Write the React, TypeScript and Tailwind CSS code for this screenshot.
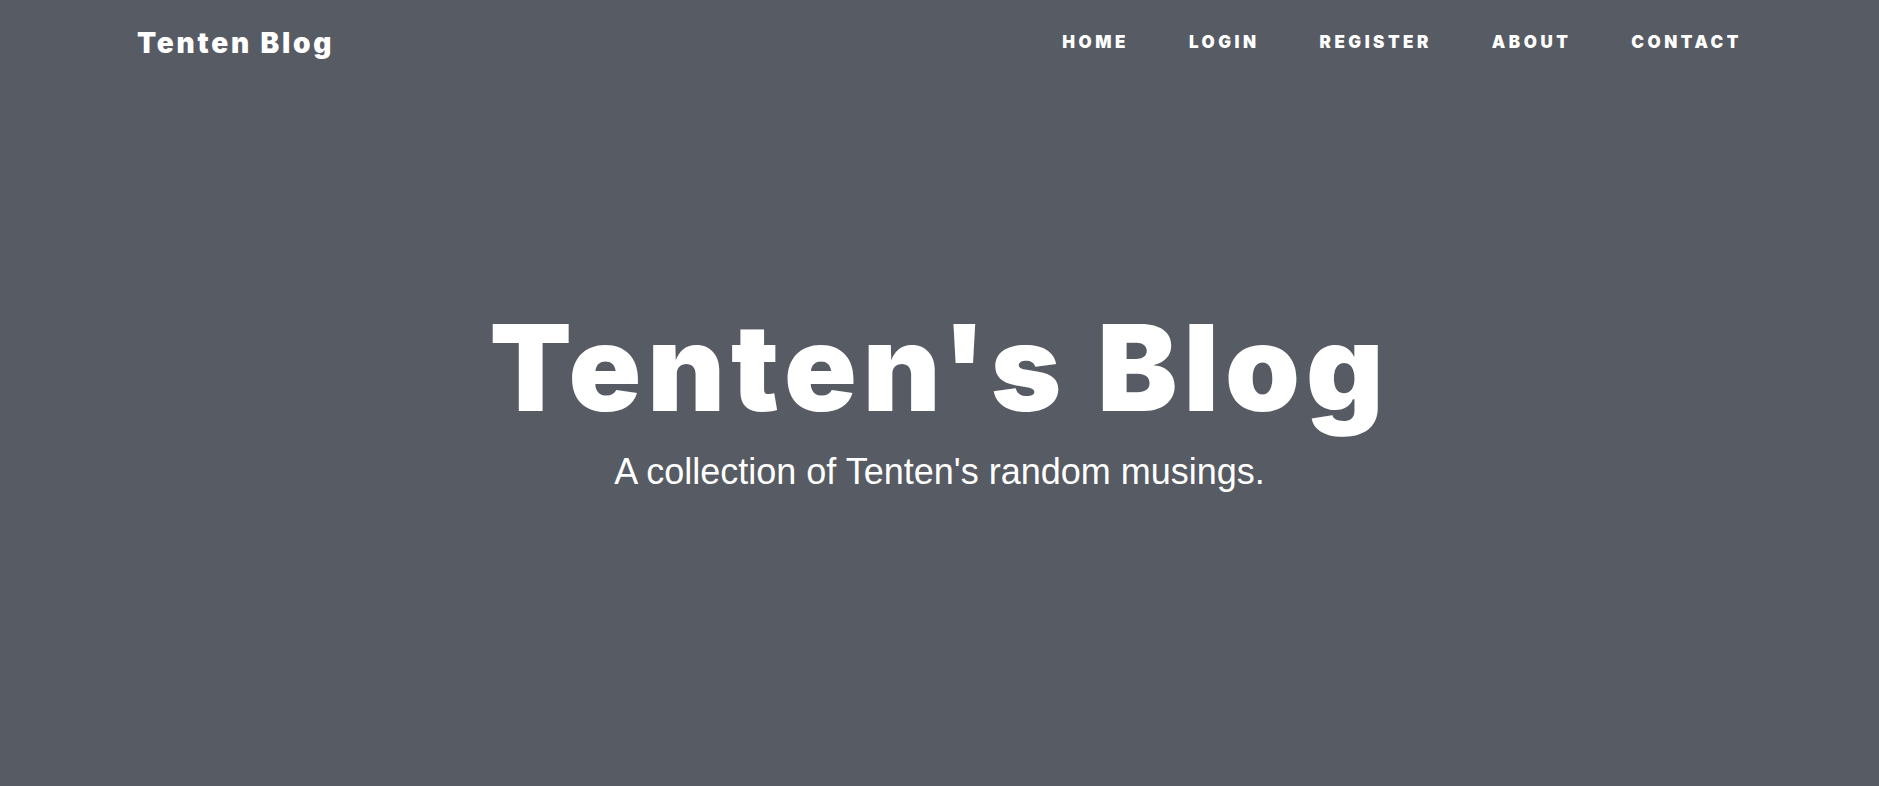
const links = ['Home', 'Login', 'Register', 'About', 'Contact']

const App = () => {
    return (
        <div className="min-h-screen bg-[#575b63] text-white">
            {/* top navigation */}
            <header className="flex h-[86px] items-center justify-between pl-[137px] pr-[137px]">
                <a href="#" className="font-['Inter',sans-serif] text-[28px] font-black tracking-[2.8px]">
                    Tenten Blog
                </a>
                <nav className="flex items-center gap-[60px]">
                    {links.map((link) => (
                        <a
                            key={link}
                            href="#"
                            className="font-['Inter',sans-serif] text-[17px] font-black uppercase tracking-[3.5px]"
                        >
                            {link}
                        </a>
                    ))}
                </nav>
            </header>

            {/* site heading */}
            <section className="flex flex-col items-center pt-[222px]">
                <h1 className="font-['Inter',sans-serif] text-[120px] leading-[120px] font-black tracking-[6px]">
                    Tenten's Blog
                </h1>
                <p className="mt-[22px] font-['Liberation_Sans',Arial,sans-serif] text-[36px] leading-[44px]">
                    A collection of Tenten's random musings.
                </p>
            </section>
        </div>
    )
}

export default App
